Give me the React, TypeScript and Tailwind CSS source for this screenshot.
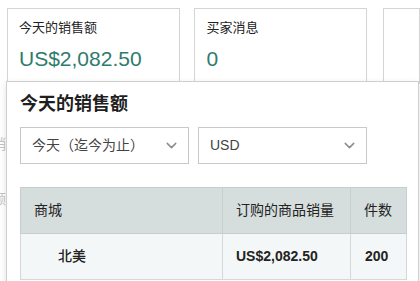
import React from "react";
import { ChevronDown } from "lucide-react";

const font = { fontFamily: '"Liberation Sans", "Noto Sans CJK SC", sans-serif' };

const StatCard: React.FC<{ label: string; value: string; className?: string }> = ({
  label,
  value,
  className,
}) => (
  <div className={"h-[76px] border border-[#d4d4d4] bg-white pl-[11px] pt-[10px] " + (className || "")}>
    <p className="text-[13px] leading-[18px] text-[#222]">{label}</p>
    <p className="mt-[10px] text-[21px] leading-[24px] text-[#2f7b6d]">{value}</p>
  </div>
);

const Select: React.FC<{ text: string; className?: string }> = ({ text, className }) => (
  <div
    className={
      "flex h-[37px] items-center justify-between border border-[#c9c9c9] bg-white pl-[11px] pr-[8px] " +
      (className || "")
    }
  >
    <span className="text-[14px] text-[#444]">{text}</span>
    <ChevronDown size={17} strokeWidth={2} className="text-[#8a8a8a]" />
  </div>
);

export default function App() {
  return (
    <div className="relative h-[281px] w-[420px] overflow-hidden bg-white" style={font}>
      {/* dashboard behind */}
      <div className="flex pl-[7px] pt-[8px]">
        <StatCard label="今天的销售额" value="US$2,082.50" className="w-[187px]" />
        <StatCard label="买家消息" value="0" className="ml-[14px] w-[186px]" />
        <div className="ml-[16px] h-[76px] w-[40px] border border-[#d4d4d4]" />
      </div>
      <div className="absolute left-[-8px] top-[134px] flex flex-col gap-[34px] text-[14px] text-[#c4c4c4]">
        <span>销</span>
        <span>额</span>
      </div>

      {/* popover */}
      <div className="absolute left-[6px] top-[81px] h-[220px] w-[413px] border border-[#cfcfcf] bg-white pl-[13px] pr-[12px] shadow-[0_2px_6px_rgba(0,0,0,0.12)]">
        <h2 className="mt-[10px] text-[18px] font-bold leading-[24px] text-[#1f1f1f]">今天的销售额</h2>
        <div className="mt-[11px] flex gap-[9px]">
          <Select text="今天（迄今为止）" className="w-[169px]" />
          <Select text="USD" className="w-[169px]" />
        </div>
        <table className="mt-[23px] w-[387px] border-collapse text-[14px] text-[#222]">
          <thead>
            <tr className="h-[46px] bg-[#d5dedd]">
              <th className="w-[202px] border border-[#c6cfce] pl-[13px] text-left font-normal">商城</th>
              <th className="w-[128px] border border-[#c6cfce] pl-[13px] text-left font-normal">订购的商品销量</th>
              <th className="border border-[#c6cfce] pl-[13px] text-left font-normal">件数</th>
            </tr>
          </thead>
          <tbody>
            <tr className="h-[46px] bg-[#f4f7f7]">
              <td className="border border-[#d3d9d9] pl-[37px] font-medium">北美</td>
              <td className="border border-[#d3d9d9] pl-[13px] font-semibold">US$2,082.50</td>
              <td className="border border-[#d3d9d9] pl-[14px] font-semibold">200</td>
            </tr>
          </tbody>
        </table>
      </div>
    </div>
  );
}
